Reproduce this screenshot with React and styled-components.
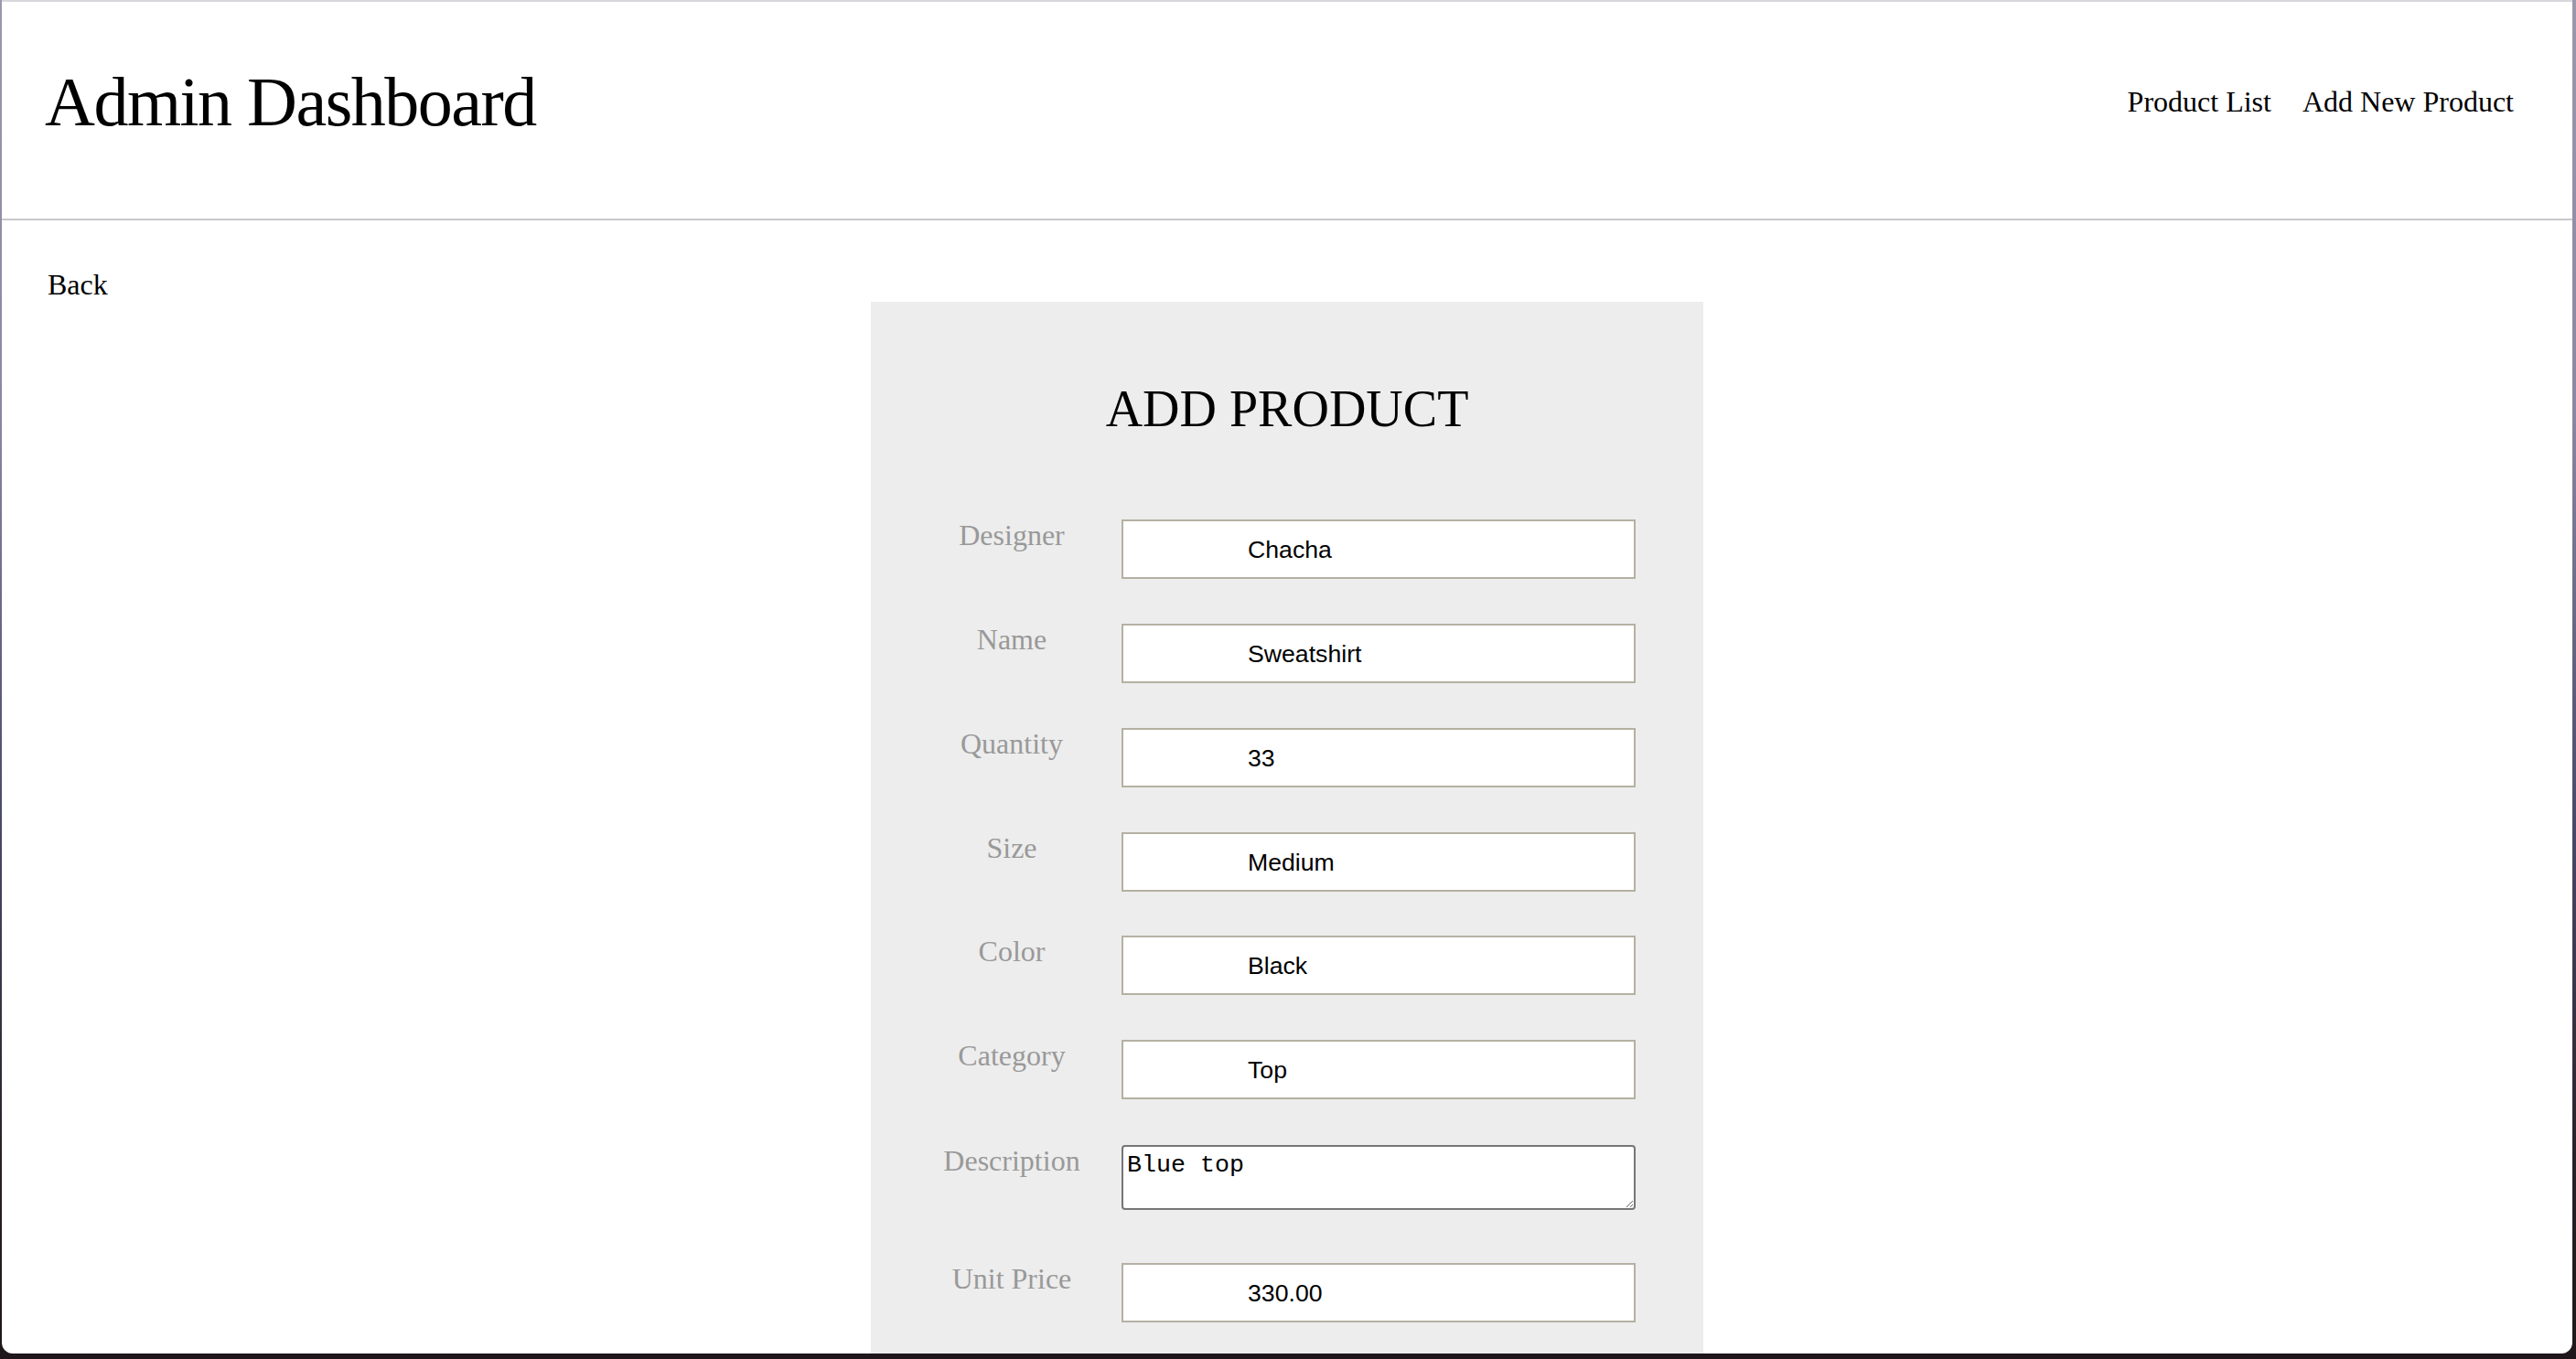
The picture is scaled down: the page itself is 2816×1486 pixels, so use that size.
import styled, { createGlobalStyle } from "styled-components";

const GlobalStyle = createGlobalStyle`
  html, body {
    margin: 0;
    height: 100%;
    overflow: hidden;
  }
  body {
    background: linear-gradient(to bottom, #9a98ab 0%, #8a88a2 30%, #4a4a6a 60%, #2a2028 85%, #1e161a 100%);
    font-family: "Liberation Serif", "Times New Roman", serif;
  }
`;

const Window = styled.div`
  box-sizing: border-box;
  margin-left: 2px;
  width: 2810px;
  height: 1480px;
  border-top: 2px solid #d8d8dc;
  border-radius: 0 0 12px 12px;
  background: #fff;
  overflow: hidden;
`;

const Header = styled.header`
  box-sizing: border-box;
  height: 239px;
  display: flex;
  align-items: center;
  justify-content: space-between;
  padding: 0 64px 18px 47px;
  border-bottom: 2px solid #c8c8cc;
`;

const Title = styled.h1`
  margin: 0;
  font-size: 76px;
  font-weight: normal;
  letter-spacing: -1.5px;
  color: #000;
`;

const Nav = styled.nav`
  display: flex;
  gap: 34px;
`;

const NavLink = styled.a`
  font-size: 32px;
  color: #000;
  text-decoration: none;
  cursor: pointer;
`;

const Main = styled.main`
  padding-top: 52px;
`;

const BackLink = styled.a`
  display: block;
  width: fit-content;
  margin-left: 50px;
  font-size: 32px;
  line-height: 37px;
  color: #000;
  text-decoration: none;
  cursor: pointer;
`;

const Panel = styled.section`
  width: 910px;
  margin: 0 auto;
  padding: 84px 0 120px;
  background: #ededed;
`;

const Heading = styled.h2`
  margin: 0 0 87px;
  font-size: 56px;
  line-height: 1.2;
  font-weight: normal;
  text-align: center;
  color: #000;
`;

const Form = styled.form`
  padding: 0 74px 0 34px;
`;

const Row = styled.div`
  display: grid;
  grid-template-columns: 240px 562px;
  align-items: start;
  margin-bottom: ${(p) => p.$gap}px;
`;

const Label = styled.label`
  margin-top: -2px;
  font-size: 32px;
  line-height: 38px;
  text-align: center;
  color: #999;
`;

const Input = styled.input`
  box-sizing: border-box;
  width: 562px;
  height: 65px;
  margin: 0;
  padding: 2px 0 0 136px;
  border: 2px solid #b5b0a2;
  background: #fff;
  font-family: "Liberation Sans", Arial, sans-serif;
  font-size: 26.67px;
  color: #000;
  outline: none;
`;

const TextArea = styled.textarea`
  display: block;
  box-sizing: border-box;
  width: 562px;
  height: 71px;
  margin: 0;
  padding: 5px 4px 4px;
  border: 2px solid #767676;
  border-radius: 4px;
  background: #fff;
  font-family: "Liberation Mono", "Courier New", monospace;
  font-size: 26.67px;
  color: #000;
  outline: none;
  resize: vertical;
`;

const fields = [
  { label: "Designer", value: "Chacha" },
  { label: "Name", value: "Sweatshirt" },
  { label: "Quantity", value: "33" },
  { label: "Size", value: "Medium" },
  { label: "Color", value: "Black" },
  { label: "Category", value: "Top", gap: 50 },
  { label: "Description", value: "Blue top", multi: true, gap: 58 },
  { label: "Unit Price", value: "330.00" },
];

export default function App() {
  return (
    <>
      <GlobalStyle />
      <Window>
        <Header>
          <Title>Admin Dashboard</Title>
          <Nav>
            <NavLink>Product List</NavLink>
            <NavLink>Add New Product</NavLink>
          </Nav>
        </Header>
        <Main>
          <BackLink>Back</BackLink>
          <Panel>
            <Heading>ADD PRODUCT</Heading>
            <Form onSubmit={(e) => e.preventDefault()}>
              {fields.map((f) => (
                <Row key={f.label} $gap={f.gap ?? 48.8}>
                  <Label>{f.label}</Label>
                  {f.multi ? (
                    <TextArea defaultValue={f.value} />
                  ) : (
                    <Input defaultValue={f.value} />
                  )}
                </Row>
              ))}
            </Form>
          </Panel>
        </Main>
      </Window>
    </>
  );
}
